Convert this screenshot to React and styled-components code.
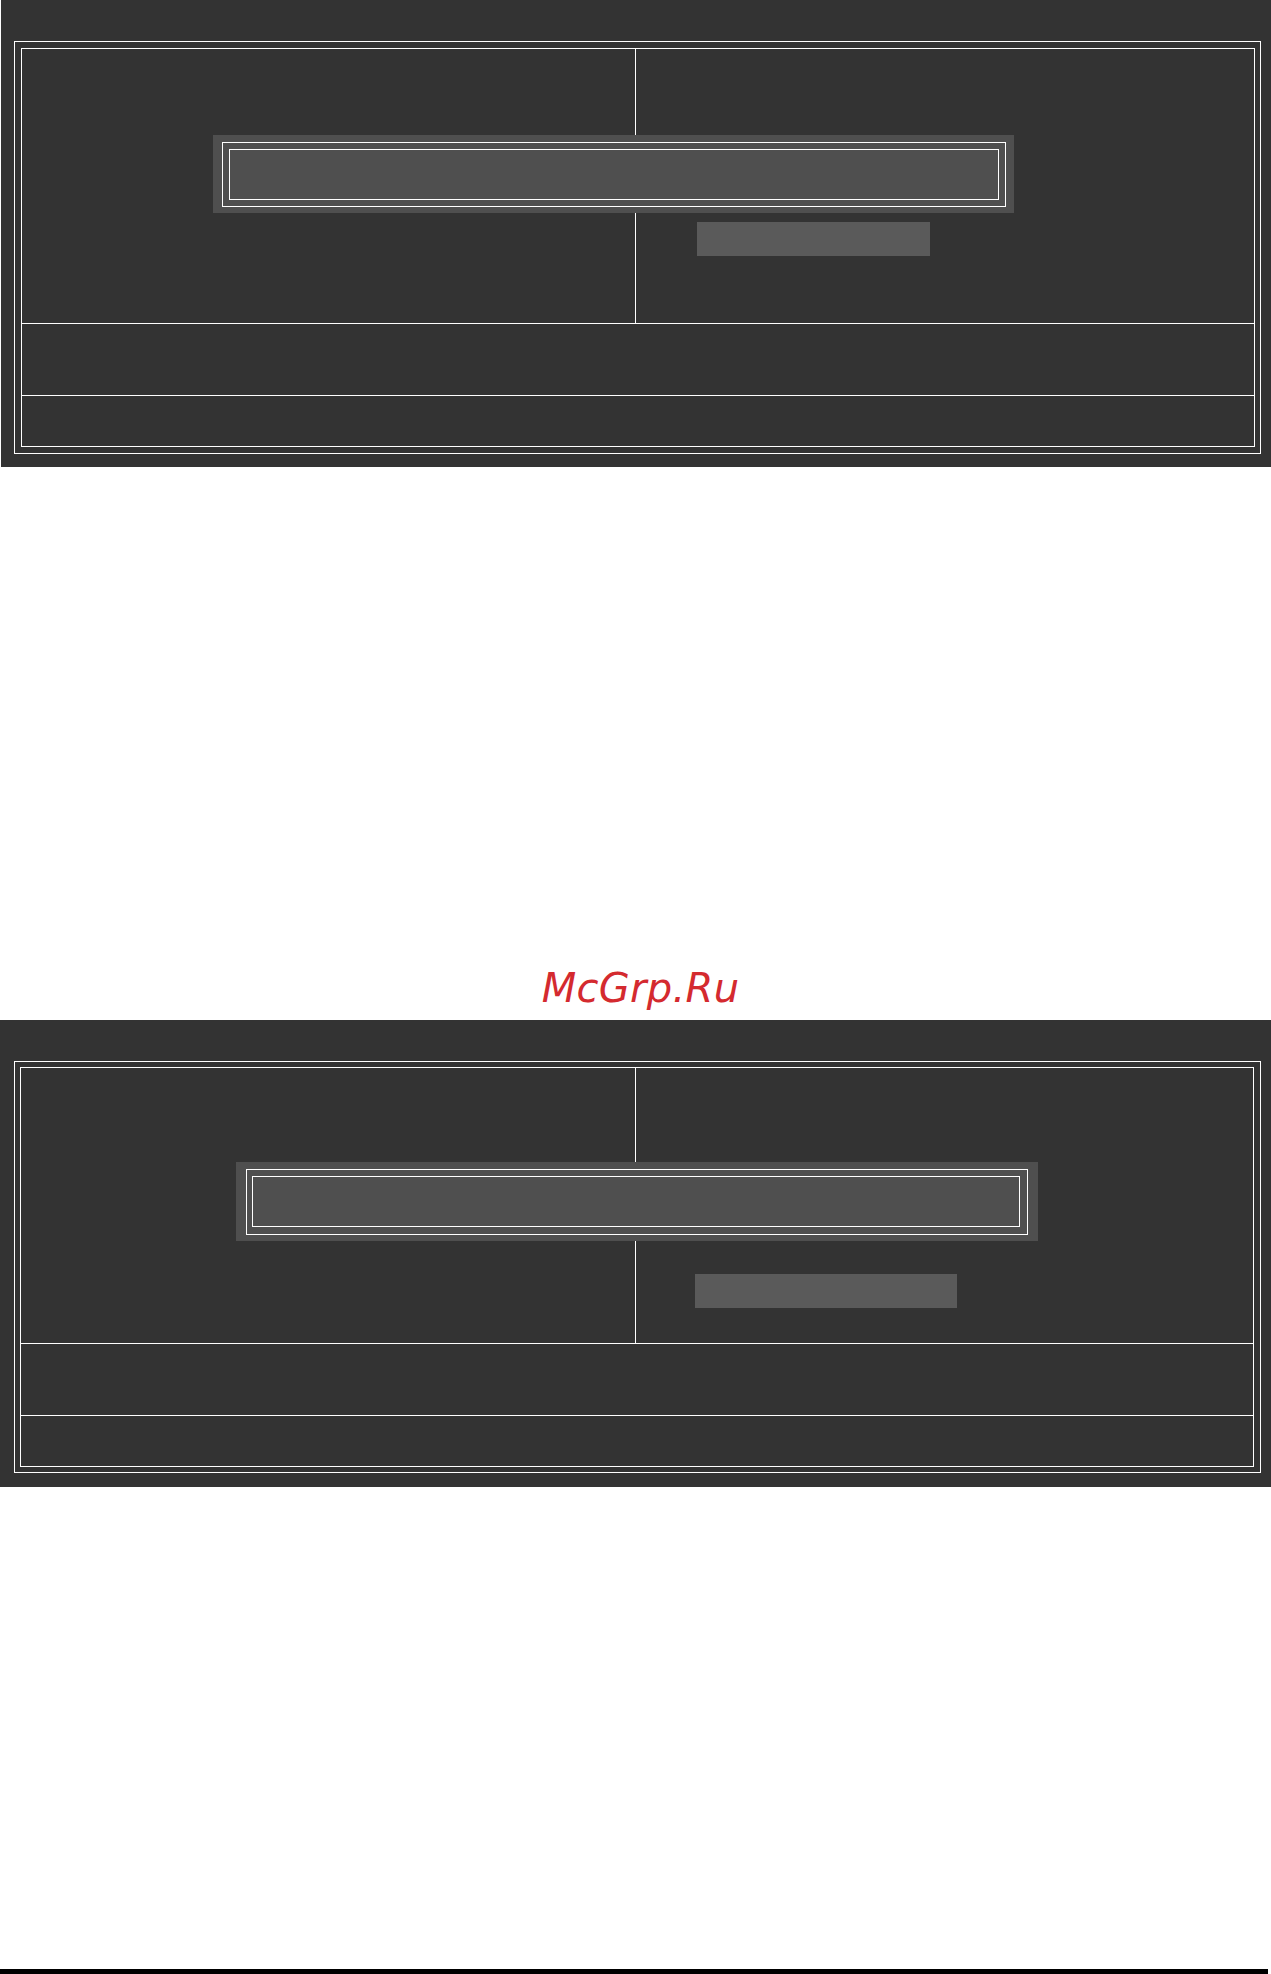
import React from "react";
import styled, { createGlobalStyle } from "styled-components";

const Global = createGlobalStyle`
  html, body { margin: 0; padding: 0; background: #ffffff; }
  body { font-family: "DejaVu Sans", sans-serif; }
`;

const Page = styled.div`
  width: 1271px;
  height: 1974px;
  display: flex;
  flex-direction: column;
  position: relative;
  overflow: hidden;
`;

const Screen = styled.div`
  margin-left: ${(p) => p.$left}px;
  margin-top: ${(p) => p.$top}px;
  width: ${(p) => p.$width}px;
  height: 467px;
  flex-shrink: 0;
  box-sizing: border-box;
  background: #333333;
  padding: 41px 9px 0 ${(p) => 14 - p.$left}px;
`;

const OuterFrame = styled.div`
  box-sizing: border-box;
  width: 1247px;
  border: 1px solid #ffffff;
  padding: ${(p) => p.$pad};
`;

const InnerFrame = styled.div`
  border: 1px solid #ffffff;
  display: flex;
  flex-direction: column;
  position: relative;
`;

const TopSection = styled.div`
  display: grid;
  grid-template-columns: ${(p) => p.$leftWidth}px 1fr;
  height: ${(p) => p.$height}px;
  border-bottom: 1px solid #ffffff;
`;

const LeftColumn = styled.div`
  border-right: 1px solid #ffffff;
`;

const RightColumn = styled.div`
  padding-top: ${(p) => p.$top}px;
  padding-left: ${(p) => p.$left}px;
`;

const Highlight = styled.div`
  width: ${(p) => p.$width}px;
  height: 34px;
  background: #5a5a5a;
`;

const HelpSection = styled.div`
  height: 71px;
  border-bottom: 1px solid #ffffff;
`;

const KeySection = styled.div`
  height: 50px;
`;

const Dialog = styled.div`
  position: absolute;
  left: ${(p) => p.$x}px;
  top: ${(p) => p.$y}px;
  width: ${(p) => p.$w}px;
  box-sizing: border-box;
  background: #4f4f4f;
  padding: ${(p) => p.$pad};
`;

const DialogOuter = styled.div`
  border: 1px solid #ffffff;
  padding: ${(p) => p.$pad};
`;

const DialogInner = styled.div`
  border: 1px solid #ffffff;
  height: 49px;
`;

const Watermark = styled.div`
  margin-top: ${(p) => p.$top}px;
  height: 46px;
  line-height: 46px;
  text-align: center;
  padding-left: 10px;
  font-family: "DejaVu Sans", "Liberation Sans", sans-serif;
  font-style: italic;
  font-size: 40px;
  color: #d42a2f;
  letter-spacing: 0.3px;
`;

const FooterRule = styled.div`
  margin-top: auto;
  width: 1268px;
  height: 5px;
  background: #000000;
`;

function BiosScreen({ left, top, framePad, topHeight, leftWidth, dialog, highlight }) {
  return (
    <Screen $left={left} $top={top} $width={1271 - left}>
      <OuterFrame $pad={framePad}>
        <InnerFrame>
          <TopSection $height={topHeight} $leftWidth={leftWidth}>
            <LeftColumn />
            <RightColumn $top={highlight.top} $left={highlight.left}>
              <Highlight $width={highlight.width} />
            </RightColumn>
          </TopSection>
          <HelpSection />
          <KeySection />
          <Dialog $x={dialog.x} $y={dialog.y} $w={dialog.w} $pad={dialog.pad}>
            <DialogOuter $pad={dialog.innerPad}>
              <DialogInner />
            </DialogOuter>
          </Dialog>
        </InnerFrame>
      </OuterFrame>
    </Screen>
  );
}

export default function App() {
  return (
    <>
      <Global />
      <Page>
        <BiosScreen
          left={1}
          top={0}
          framePad="6px 5px 6px 6px"
          topHeight={274}
          leftWidth={614}
          dialog={{ x: 191, y: 86, w: 801, pad: "7px 8px 6px 9px", innerPad: "6px" }}
          highlight={{ top: 173, left: 61, width: 233 }}
        />
        <Watermark $top={498}>McGrp.Ru</Watermark>
        <BiosScreen
          left={0}
          top={9}
          framePad="5px 6px 5px 5px"
          topHeight={275}
          leftWidth={615}
          dialog={{ x: 215, y: 94, w: 802, pad: "7px 10px 6px 10px", innerPad: "6px 7px 7px 5px" }}
          highlight={{ top: 206, left: 59, width: 262 }}
        />
        <FooterRule />
      </Page>
    </>
  );
}
